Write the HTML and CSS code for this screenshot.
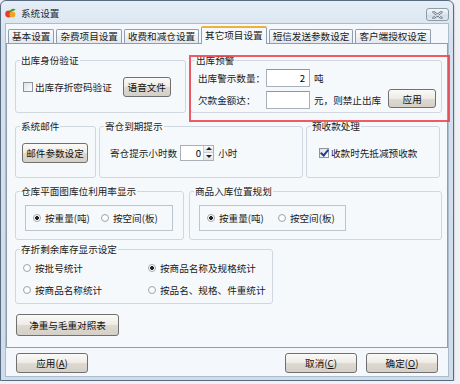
FILE: index.html
```html
<!DOCTYPE html>
<html lang="zh-CN">
<head>
    <meta charset="UTF-8">
    <title>系统设置</title>
    <link rel="stylesheet" href="styles.css">
</head>
<body>
    <div class="window">
        <div class="titlebar">
            <svg class="app-icon" width="11" height="10" viewBox="0 0 11 10">
                <circle cx="3.6" cy="6" r="3.4" fill="#e0402c"/>
                <circle cx="7.4" cy="6.4" r="2.9" fill="#f2a325"/>
                <path d="M4.5 3.6 C5.6 0.4 9 0 10.6 1.6 C8.8 3 6.8 3.6 4.5 3.6Z" fill="#3c9a2e"/>
            </svg>
            <span class="title">系统设置</span>
            <button class="close-btn" type="button" aria-label="关闭">
                <svg width="11" height="8" viewBox="0 0 11 8">
                    <path d="M1.5 1 L9.5 7 M9.5 1 L1.5 7" stroke="#6f7b88" stroke-width="2.4" stroke-linecap="round"/>
                    <path d="M1.5 1 L9.5 7 M9.5 1 L1.5 7" stroke="#f4f6f8" stroke-width="0.9" stroke-linecap="round"/>
                </svg>
            </button>
        </div>

        <div class="client">
            <div class="tabs">
                <div class="tab">基本设置</div>
                <div class="tab">杂费项目设置</div>
                <div class="tab">收费和减仓设置</div>
                <div class="tab active">其它项目设置</div>
                <div class="tab">短信发送参数设定</div>
                <div class="tab">客户端授权设定</div>
            </div>

            <div class="pane">
                <div class="row row-1">
                    <fieldset class="group g-verify">
                        <legend>出库身份验证</legend>
                        <div class="group-body">
                            <label class="check"><input type="checkbox">出库存折密码验证</label>
                            <button class="btn btn-voice" type="button">语音文件</button>
                        </div>
                    </fieldset>
                    <fieldset class="group g-warn">
                        <legend>出库预警</legend>
                        <div class="group-body">
                            <div class="warn-line">
                                <span class="warn-label">出库警示数量：</span>
                                <input class="field num" type="text" value="2">
                                <span class="unit">吨</span>
                            </div>
                            <div class="warn-line">
                                <span class="warn-label">欠款金额达：</span>
                                <input class="field num" type="text" value="">
                                <span class="unit">元，则禁止出库</span>
                                <button class="btn btn-apply" type="button">应用</button>
                            </div>
                        </div>
                    </fieldset>
                </div>

                <div class="row row-2">
                    <fieldset class="group g-mail">
                        <legend>系统邮件</legend>
                        <div class="group-body">
                            <button class="btn btn-mail" type="button">邮件参数设定</button>
                        </div>
                    </fieldset>
                    <fieldset class="group g-expire">
                        <legend>寄仓到期提示</legend>
                        <div class="group-body">
                            <span>寄仓提示小时数</span>
                            <div class="spin">
                                <input class="spin-value" type="text" value="0">
                                <div class="spin-btns">
                                    <span class="spin-up"></span>
                                    <span class="spin-down"></span>
                                </div>
                            </div>
                            <span>小时</span>
                        </div>
                    </fieldset>
                    <fieldset class="group g-prepay">
                        <legend>预收款处理</legend>
                        <div class="group-body">
                            <label class="check"><input type="checkbox" checked>收款时先抵减预收款</label>
                        </div>
                    </fieldset>
                </div>

                <div class="row row-3">
                    <fieldset class="group g-usage">
                        <legend>仓库平面图库位利用率显示</legend>
                        <div class="group-body">
                            <div class="radio-box">
                                <label class="radio"><input type="radio" name="usage" checked>按重量(吨)</label>
                                <label class="radio"><input type="radio" name="usage">按空间(板)</label>
                            </div>
                        </div>
                    </fieldset>
                    <fieldset class="group g-plan">
                        <legend>商品入库位置规划</legend>
                        <div class="group-body">
                            <div class="radio-box">
                                <label class="radio"><input type="radio" name="plan" checked>按重量(吨)</label>
                                <label class="radio"><input type="radio" name="plan">按空间(板)</label>
                            </div>
                        </div>
                    </fieldset>
                </div>

                <div class="row row-4">
                    <fieldset class="group g-stock">
                        <legend>存折剩余库存显示设定</legend>
                        <div class="group-body">
                            <label class="radio"><input type="radio" name="stock">按批号统计</label>
                            <label class="radio"><input type="radio" name="stock" checked>按商品名称及规格统计</label>
                            <label class="radio"><input type="radio" name="stock">按商品名称统计</label>
                            <label class="radio"><input type="radio" name="stock">按品名、规格、件重统计</label>
                        </div>
                    </fieldset>
                </div>

                <button class="btn btn-weight" type="button">净重与毛重对照表</button>
            </div>

            <div class="footer">
                <button class="btn btn-foot" type="button">应用(<u>A</u>)</button>
                <span class="spacer"></span>
                <button class="btn btn-foot" type="button">取消(<u>C</u>)</button>
                <button class="btn btn-foot" type="button">确定(<u>O</u>)</button>
            </div>
        </div>

        <!-- red marker drawn over the screenshot -->
        <div class="mark"></div>
    </div>
</body>
</html>
```

FILE: styles.css
```css
* {
    box-sizing: border-box;
}

body {
    margin: 0;
    background: #eef2f6;
    font-family: "Noto Sans CJK SC", "Noto Sans", sans-serif;
    font-size: 9.6px;
    line-height: 12px;
    color: #1a1a1a;
}

.window {
    position: relative;
    width: 454px;
    height: 381px;
    padding: 0 4px 3px 4px;
    border: 1px solid #596b80;
    border-radius: 6px 6px 0 0;
    background: linear-gradient(#e6eef7, #d5e1ee 40px, #cfdcea);
    box-shadow: 0 1px 2px rgba(0, 0, 0, 0.35);
    display: flex;
    flex-direction: column;
}

/* title bar */
.titlebar {
    height: 22px;
    display: flex;
    align-items: center;
}

.app-icon {
    margin-top: 2px;
}

.title {
    margin-left: 5px;
    margin-top: 2px;
    color: #1e2a36;
}

.close-btn {
    margin-left: auto;
    align-self: flex-start;
    margin-top: 7px;
    width: 23px;
    height: 13px;
    padding: 0;
    border: 1px solid #8e9bab;
    border-radius: 3px;
    background: linear-gradient(#f4f7fa, #dde5ee 50%, #d2dce7 51%, #dfe7ef);
    display: flex;
    align-items: center;
    justify-content: center;
}

/* client area */
.client {
    flex: 1;
    border: 1px solid #adbccb;
    background: #f4f8fc;
    display: flex;
    flex-direction: column;
}

.tabs {
    height: 20px;
    padding-left: 2px;
    margin-bottom: -1px;
    display: flex;
    align-items: flex-end;
    gap: 2px;
    position: relative;
    z-index: 1;
}

.tab {
    height: 14px;
    margin-bottom: 1px;
    padding: 0 3px;
    border: 1px solid #8e9db0;
    border-bottom: none;
    border-radius: 2px 2px 0 0;
    background: linear-gradient(#fbfcfd, #e2e8ee);
    line-height: 13px;
    white-space: nowrap;
}

.tab.active {
    height: 18px;
    margin-bottom: 0;
    border-top: 2px solid #f0b13a;
    background: #f6f9fc;
    line-height: 15px;
}

.pane {
    height: 305px;
    padding: 10px 5px 0 8px;
    border: 1px solid #8e9db0;
    background: #f6f9fc;
}

/* group boxes */
.row {
    display: flex;
}

.row-1 {
    gap: 4px;
}

.row-2 {
    margin-top: 7px;
    gap: 3px;
}

.row-3 {
    margin-top: 7px;
    gap: 5px;
}

.row-4 {
    margin-top: 3px;
}

.group {
    margin: 0;
    padding: 0;
    min-width: 0;
    border: 1px solid #d0d7df;
    border-radius: 3px;
}

.group legend {
    margin-left: 4px;
    padding: 0 1px;
    line-height: 12px;
}

.group-body {
    display: flex;
    align-items: center;
}

.g-verify { width: 171px; }
.g-warn { width: 252px; }
.g-mail { width: 81px; }
.g-expire { width: 204px; }
.g-prepay { width: 134px; }
.g-usage { width: 169px; }
.g-plan { width: 253px; }
.g-stock { width: 258px; }

.g-verify .group-body {
    height: 46px;
    padding: 0 0 4px 7px;
}

.g-warn .group-body {
    height: 46px;
    padding: 3px 0 0 7px;
    flex-direction: column;
    align-items: flex-start;
    gap: 4px;
}

.row-2 .group-body {
    height: 45px;
    padding-bottom: 4px;
}

.g-mail .group-body { padding-left: 6px; }
.g-expire .group-body { padding-left: 10px; }
.g-prepay .group-body { padding-left: 12px; }

.row-3 .group-body {
    height: 42px;
    padding: 8px 0 0 9px;
    align-items: flex-start;
}

.g-stock .group-body {
    height: 48px;
    padding: 2px 0 0 7px;
    display: grid;
    grid-template-columns: 125px 1fr;
    grid-auto-rows: 22px;
    align-items: center;
}

/* controls */
.btn {
    height: 20px;
    padding: 0;
    border: 1px solid #707070;
    border-radius: 3px;
    background: linear-gradient(#fbfaf8, #eeebe5 50%, #dedad2 51%, #d4d0c7);
    font: inherit;
    line-height: 18px;
    color: #111;
    text-align: center;
}

.btn u {
    text-decoration: underline;
}

.btn-voice {
    width: 48px;
    margin-left: 11px;
}

.btn-apply {
    width: 48px;
    height: 19px;
    margin-left: 7px;
    margin-top: -3px;
}

.btn-mail {
    width: 66px;
}

.btn-weight {
    width: 103px;
    height: 22px;
    margin: 10px 0 0 1px;
}

.btn-foot {
    width: 72px;
}

.check {
    display: flex;
    align-items: center;
    gap: 2px;
    white-space: nowrap;
}

.check input {
    appearance: none;
    width: 10px;
    height: 10px;
    margin: 0;
    border: 1px solid #8f949a;
    background: linear-gradient(135deg, #dfe2e6, #fdfdfd);
    position: relative;
}

.check input:checked::after {
    content: "";
    position: absolute;
    left: 2px;
    top: -1px;
    width: 3px;
    height: 6px;
    border: solid #1f3d98;
    border-width: 0 2px 2px 0;
    transform: rotate(40deg);
}

.radio {
    display: flex;
    align-items: center;
    gap: 4px;
    white-space: nowrap;
}

.radio input {
    appearance: none;
    width: 8px;
    height: 8px;
    margin: 0;
    border: 1px solid #a3a7ac;
    border-radius: 50%;
    background: radial-gradient(circle, #fff 40%, #e4e6e8);
}

.radio input:checked {
    background: radial-gradient(circle, #222 0 1.6px, #fff 2.2px);
}

.radio-box {
    height: 26px;
    padding-left: 7px;
    border: 1px solid #bcc4cc;
    display: flex;
    align-items: center;
    gap: 11px;
}

.g-usage .radio-box { width: 148px; }
.g-plan .radio-box { width: 147px; gap: 14px; }

.warn-line {
    height: 18px;
    display: flex;
    align-items: center;
}

.warn-label {
    width: 68px;
}

.field {
    width: 44px;
    height: 18px;
    border: 1px solid #a9b0b8;
    border-top-color: #8f969e;
    background: #fff;
    font: inherit;
}

.num {
    text-align: right;
    padding: 0 4px 0 0;
}

.unit {
    margin-left: 4px;
}

.spin {
    width: 34px;
    height: 16px;
    margin: 0 4px 0 3px;
    border: 1px solid #a9b0b8;
    background: #fff;
    display: flex;
}

.spin-value {
    width: 22px;
    border: none;
    padding: 0 2px 0 0;
    font: inherit;
    text-align: right;
    background: transparent;
}

.spin-btns {
    flex: 1;
    display: flex;
    flex-direction: column;
    border-left: 1px solid #c9cfd6;
}

.spin-up,
.spin-down {
    flex: 1;
    background: linear-gradient(#fafafa, #e4e4e4);
    display: flex;
    align-items: center;
    justify-content: center;
}

.spin-up {
    border-bottom: 1px solid #c9cfd6;
}

.spin-up::after {
    content: "";
    border: 3px solid transparent;
    border-top: none;
    border-bottom: 3px solid #222;
}

.spin-down::after {
    content: "";
    border: 3px solid transparent;
    border-bottom: none;
    border-top: 3px solid #222;
}

.footer {
    flex: 1;
    padding: 5px 10px 0 10px;
    display: flex;
    gap: 9px;
}

.spacer {
    flex: 1;
}

.mark {
    position: absolute;
    left: 188px;
    top: 54px;
    width: 261px;
    height: 67px;
    border: 2px solid rgba(236, 64, 74, 0.85);
    pointer-events: none;
}
```
